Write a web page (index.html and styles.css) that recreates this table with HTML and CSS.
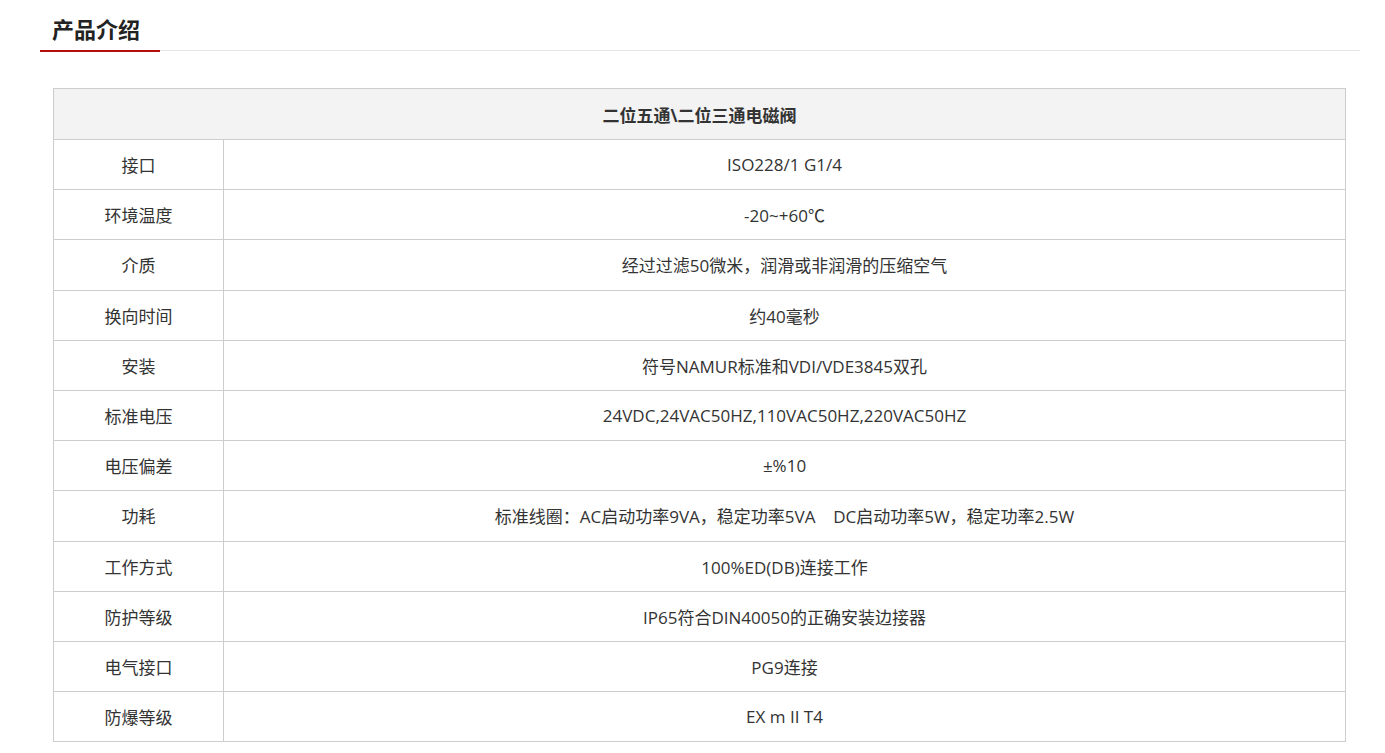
FILE: index.html
```html
<!DOCTYPE html>
<html lang="zh-CN">
<head>
<meta charset="utf-8">
<title>产品介绍</title>
<link rel="stylesheet" href="styles.css">
</head>
<body>
<div class="wrap">
  <div class="tabbar">
    <h2 class="tab-title">产品介绍</h2>
  </div>
  <table class="spec">
    <thead>
      <tr><th colspan="2">二位五通\二位三通电磁阀</th></tr>
    </thead>
    <tbody>
      <tr><td class="k">接口</td><td>ISO228/1 G1/4</td></tr>
      <tr><td class="k">环境温度</td><td>-20~+60℃</td></tr>
      <tr><td class="k">介质</td><td>经过过滤50微米，润滑或非润滑的压缩空气</td></tr>
      <tr><td class="k">换向时间</td><td>约40毫秒</td></tr>
      <tr><td class="k">安装</td><td>符号NAMUR标准和VDI/VDE3845双孔</td></tr>
      <tr><td class="k">标准电压</td><td>24VDC,24VAC50HZ,110VAC50HZ,220VAC50HZ</td></tr>
      <tr><td class="k">电压偏差</td><td>±%10</td></tr>
      <tr><td class="k">功耗</td><td>标准线圈：AC启动功率9VA，稳定功率5VA&nbsp;&nbsp;&nbsp; DC启动功率5W，稳定功率2.5W</td></tr>
      <tr><td class="k">工作方式</td><td>100%ED(DB)连接工作</td></tr>
      <tr><td class="k">防护等级</td><td>IP65符合DIN40050的正确安装边接器</td></tr>
      <tr><td class="k">电气接口</td><td>PG9连接</td></tr>
      <tr><td class="k">防爆等级</td><td>EX m II T4</td></tr>
    </tbody>
  </table>
</div>
</body>
</html>
```

FILE: styles.css
```css
html, body {
  margin: 0;
  padding: 0;
  background: #fff;
}
body {
  font-family: "Open Sans", "Noto Sans CJK SC", sans-serif;
  color: #333;
}
.wrap {
  width: 1320px;
  margin-left: 40px;
}
.tabbar {
  border-bottom: 1px solid #e5e5e5;
  height: 51px;
  box-sizing: border-box;
}
.tab-title {
  margin: 0;
  display: inline-block;
  width: 120px;
  box-sizing: border-box;
  padding-left: 12px;
  height: 52px;
  border-bottom: 2px solid #b80d0d;
  font-family: "Noto Sans CJK SC", sans-serif;
  font-size: 22px;
  font-weight: 700;
  line-height: 56px;
  color: #222;
}
.spec {
  margin: 37px 0 0 13px;
  width: 1293px;
  border-collapse: collapse;
  font-size: 17px;
}
.spec th, .spec td {
  border: 1px solid #cdcdcd;
  text-align: center;
  height: 50.2px;
  padding: 0;
  box-sizing: border-box;
}
.spec th {
  background: #f3f3f3;
  font-weight: 700;
  height: 51px;
  color: #333;
}
.spec td.k {
  width: 170px;
}
```
